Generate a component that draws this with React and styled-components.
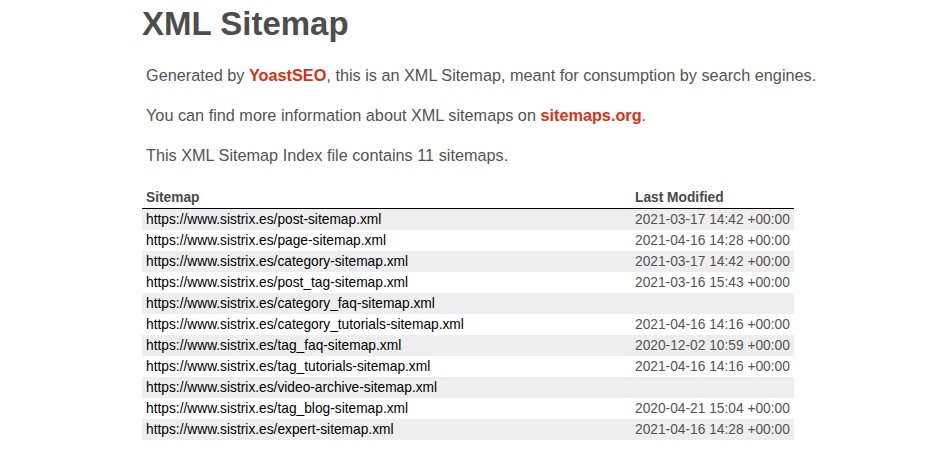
import styled, { createGlobalStyle } from 'styled-components';

const GlobalStyle = createGlobalStyle`
  html, body {
    margin: 0;
    padding: 0;
    background: #fff;
  }
  body {
    font-family: Arial, "Liberation Sans", Helvetica, sans-serif;
    font-size: 17px;
    color: #545353;
  }
`;

const sitemaps = [
  ['https://www.sistrix.es/post-sitemap.xml', '2021-03-17 14:42 +00:00'],
  ['https://www.sistrix.es/page-sitemap.xml', '2021-04-16 14:28 +00:00'],
  ['https://www.sistrix.es/category-sitemap.xml', '2021-03-17 14:42 +00:00'],
  ['https://www.sistrix.es/post_tag-sitemap.xml', '2021-03-16 15:43 +00:00'],
  ['https://www.sistrix.es/category_faq-sitemap.xml', ''],
  ['https://www.sistrix.es/category_tutorials-sitemap.xml', '2021-04-16 14:16 +00:00'],
  ['https://www.sistrix.es/tag_faq-sitemap.xml', '2020-12-02 10:59 +00:00'],
  ['https://www.sistrix.es/tag_tutorials-sitemap.xml', '2021-04-16 14:16 +00:00'],
  ['https://www.sistrix.es/video-archive-sitemap.xml', ''],
  ['https://www.sistrix.es/tag_blog-sitemap.xml', '2020-04-21 15:04 +00:00'],
  ['https://www.sistrix.es/expert-sitemap.xml', '2021-04-16 14:28 +00:00'],
];

export default function App() {
  return (
    <>
      <GlobalStyle />
      <Content>
        <Title>XML Sitemap</Title>
        <Expl>
          Generated by <Brand href="#">YoastSEO</Brand>, this is an XML Sitemap, meant for
          consumption by search engines.
        </Expl>
        <Expl>
          You can find more information about XML sitemaps on{' '}
          <Brand href="#">sitemaps.org</Brand>.
        </Expl>
        <Expl>This XML Sitemap Index file contains 11 sitemaps.</Expl>
        <Table>
          <thead>
            <tr>
              <Th $wide>Sitemap</Th>
              <Th>Last Modified</Th>
            </tr>
          </thead>
          <tbody>
            {sitemaps.map(([loc, mod], i) => (
              <Row key={loc} $odd={i % 2 === 0}>
                <Td>
                  <Loc href="#">{loc}</Loc>
                </Td>
                <Td>{mod}</Td>
              </Row>
            ))}
          </tbody>
        </Table>
      </Content>
    </>
  );
}

const Content = styled.div`
  padding: 0 0 0 142px;
  width: 700px;
`;

const Title = styled.h1`
  margin: 0;
  padding-top: 3px;
  font-size: 33px;
  line-height: 42px;
  font-weight: bold;
  color: #4e4d4d;
`;

const Expl = styled.p`
  margin: 20px 4px;
  font-size: 16.25px;
  line-height: 20px;
  white-space: nowrap;
`;

const Brand = styled.a`
  color: #da3114;
  font-weight: bold;
  text-decoration: none;
`;

const Table = styled.table`
  width: 652px;
  border: none;
  border-collapse: collapse;
  margin-top: 25px;
`;

const Th = styled.th`
  text-align: left;
  font-size: 13.75px;
  font-weight: bold;
  padding: 0 4px 3px;
  width: ${(p) => (p.$wide ? '481px' : 'auto')};
  border-bottom: 1px solid #000;
  color: #4a4949;
  white-space: nowrap;
`;

const Row = styled.tr`
  td {
    background-color: ${(p) => (p.$odd ? '#eee' : '#fff')};
  }
`;

const Td = styled.td`
  font-size: 13.75px;
  height: 21px;
  padding: 0 4px;
  line-height: 21px;
  white-space: nowrap;
`;

const Loc = styled.a`
  color: #000;
  text-decoration: none;
`;
